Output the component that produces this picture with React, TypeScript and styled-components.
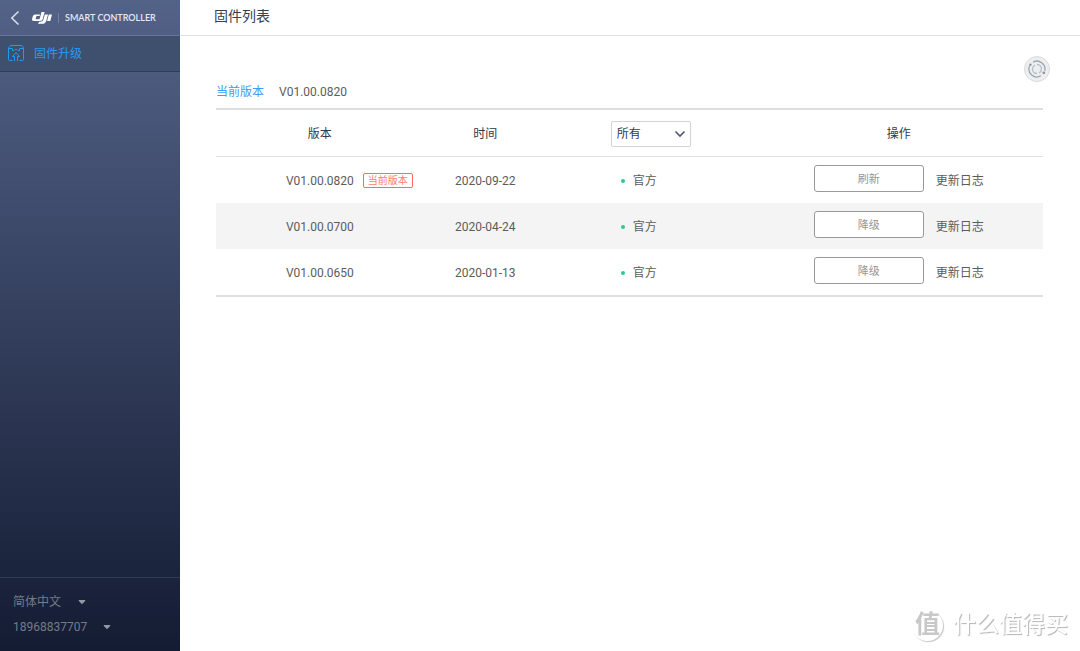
import React from "react";
import styled, { createGlobalStyle } from "styled-components";
import { SiDji } from "react-icons/si";

const GlobalStyle = createGlobalStyle`
  *, *::before, *::after { box-sizing: border-box; }
  body {
    margin: 0;
    background: #fff;
    color: #5c5c5c;
    font-family: Roboto, "Noto Sans CJK SC", sans-serif;
    font-size: 12px;
    line-height: 20px;
  }
  button, select { font: inherit; color: inherit; }
  a { color: inherit; text-decoration: none; }
`;

const Page = styled.div`
  display: flex;
  min-height: 100vh;
`;

const Sidebar = styled.aside`
  display: flex;
  flex-direction: column;
  flex: 0 0 180px;
  background: linear-gradient(#536287, #141c33);
`;

const Brand = styled.div`
  display: flex;
  align-items: center;
  height: 36px;
  padding-left: 10px;
  border-bottom: 1px solid #667699;
  color: #fff;
`;

const BackButton = styled.button`
  display: flex;
  margin-right: 12px;
  padding: 0;
  border: 0;
  background: none;
  color: #dde1ea;
`;

const ProductName = styled.span`
  margin-left: 6px;
  padding-left: 6px;
  border-left: 1px solid #7381a0;
  color: #e4e8f0;
  font-family: Lato, sans-serif;
  font-size: 9px;
  font-weight: 600;
  line-height: 10px;
  white-space: nowrap;
`;

const NavItem = styled.a`
  display: flex;
  align-items: center;
  gap: 9px;
  height: 36px;
  padding-left: 8px;
  border-bottom: 1px solid #2b3f5a;
  background: #3e506e;
  && { color: #2b9af3; }
`;

const Account = styled.div`
  display: flex;
  flex-direction: column;
  align-items: flex-start;
  gap: 5px;
  margin-top: auto;
  padding: 14px 13px;
  border-top: 1px solid #303a52;
  color: #747b8a;
`;

const Picker = styled.label`
  display: grid;
  align-items: center;
  > * { grid-area: 1 / 1; }
  > svg { justify-self: end; pointer-events: none; }
`;

const PlainSelect = styled.select`
  appearance: none;
  height: 20px;
  padding: 0 24px 0 0;
  border: 0;
  background: none;
`;

const AccountButton = styled.button`
  display: flex;
  align-items: center;
  gap: 16px;
  padding: 0;
  border: 0;
  background: none;
`;

const Main = styled.main`
  flex: 1;
  min-width: 0;
`;

const TitleBar = styled.header`
  height: 36px;
  padding: 0 34px;
  border-bottom: 1px solid #e0e0e0;
`;

const Title = styled.h1`
  margin: 0;
  color: #37404a;
  font-size: 14px;
  font-weight: 400;
  line-height: 32px;
`;

const Content = styled.section`
  padding: 20px 37px 0 36px;
`;

const Toolbar = styled.div`
  display: flex;
  justify-content: flex-end;
  margin-right: -7px;
`;

const RefreshButton = styled.button`
  display: flex;
  align-items: center;
  justify-content: center;
  width: 26px;
  height: 26px;
  padding: 0;
  border: 1px solid #dcdcdc;
  border-radius: 50%;
  background: #eee;
`;

const Current = styled.p`
  display: flex;
  gap: 15px;
  margin: 0 0 6px;
`;

const CurrentLabel = styled.span`
  color: #3d9df2;
`;

const Table = styled.table`
  width: 100%;
  table-layout: fixed;
  border-collapse: separate;
  border-spacing: 0;
  border-top: 2px solid #dfdfdf;
  border-bottom: 2px solid #dfdfdf;
  text-align: center;
`;

const HeadCell = styled.th<{ $width: string }>`
  width: ${(p) => p.$width};
  height: 47px;
  padding: 2px 0 0 1px;
  border-bottom: 1px solid #dfdfdf;
  color: #303a4c;
  font-weight: 400;
`;

const Row = styled.tr`
  &:nth-child(even) { background: #f4f4f4; }
`;

const Cell = styled.td`
  height: 46px;
  padding: 2px 0 0 1px;
`;

const FilterBox = styled(Picker)`
  width: 80px;
  margin: 0 auto;
  > svg { margin-right: 5px; }
`;

const FilterSelect = styled.select`
  appearance: none;
  width: 80px;
  height: 26px;
  padding: 0 5px;
  border: 1px solid #d3d3d3;
  border-radius: 2px;
  background: #fff;
`;

const Version = styled.div`
  display: grid;
  grid-template-columns: 1fr auto 1fr;
  align-items: center;
`;

const VersionNumber = styled.span`
  grid-column: 2;
`;

const Badge = styled.span`
  justify-self: start;
  margin: 0 0 2px 9px;
  padding: 0 4px;
  border: 1px solid #ff6b62;
  border-radius: 2px;
  color: #ff7a6e;
  font-size: 10px;
  line-height: 13px;
  white-space: nowrap;
`;

const Source = styled.span`
  display: flex;
  align-items: center;
  justify-content: center;
  gap: 8px;
  padding-right: 24px;
  &::before {
    width: 4px;
    height: 4px;
    border-radius: 50%;
    background: #2fc79a;
    content: "";
  }
`;

const Actions = styled.div`
  display: flex;
  align-items: center;
  justify-content: center;
  gap: 12px;
`;

const ActionButton = styled.button`
  width: 110px;
  height: 27px;
  margin-bottom: 5px;
  padding: 2px 0 0;
  border: 1px solid #999;
  border-radius: 3px;
  background: #fff;
  color: #969696;
  font-size: 11px;
`;

const Watermark = styled.div`
  position: fixed;
  right: 12px;
  bottom: 10px;
  display: flex;
  align-items: center;
  gap: 10px;
  color: #fff;
  font-size: 23px;
  font-weight: 500;
  line-height: 32px;
  text-shadow: 1px 1px 1px #b4b4b4;
  pointer-events: none;
`;

const Seal = styled.span`
  width: 31px;
  height: 31px;
  border-radius: 50%;
  box-shadow: 1px 1px 1px #c4c4c4;
  color: #c8c8c8;
  font-size: 25px;
  font-weight: 700;
  line-height: 29px;
  text-align: center;
  text-shadow: none;
`;

const Caret = () => (
  <svg width="8" height="5" viewBox="0 0 8 5" aria-hidden="true">
    <path d="M.8 0h6.400v1L4 4.200 .8 1z" fill="#9097a5" />
  </svg>
);

const Chevron = () => (
  <svg width="12" height="8" viewBox="0 0 12 8" fill="none" stroke="#4a5872" strokeWidth="1.6" aria-hidden="true">
    <path d="M1.5 1.5 6 6l4.500-4.500" />
  </svg>
);

const BackIcon = () => (
  <svg width="10" height="16" viewBox="0 0 10 16" fill="none" stroke="currentColor" strokeWidth="1.5" aria-hidden="true">
    <path d="M8.500 1.500 1.800 8l6.700 6.500" />
  </svg>
);

const FirmwareIcon = () => (
  <svg width="17" height="17" viewBox="0 0 17 17" fill="none" stroke="#1f9cec" aria-hidden="true">
    <path d="M4.500 15.500h-3a1 1 0 0 1-1-1V3L2.500.5h11.500L15.500 3v11.500a1 1 0 0 1-1 1h-3" />
    <path d="M.5 3.500h4v2h1.500l1-1h2l1 1h1.500v-2h4" />
    <path d="M6.500 16v-4.500h-2L8 7.500l3.500 4h-2V16" />
  </svg>
);

const RefreshIcon = () => (
  <svg width="18" height="18" viewBox="0 0 18 18" fill="none" stroke="#9aa7b3" strokeWidth="1.300" aria-hidden="true">
    <path d="M5 2.200a8 8 0 0 1 11.800 8.600" />
    <path d="M13 15.800A8 8 0 0 1 1.500 6" />
    <path d="M9 4.500a4.500 4.500 0 0 1 4.500 4.500c0 1.800-1 3.200-2.500 4" stroke="#b4bec7" />
    <path d="M9 13.500A4.500 4.500 0 0 1 4.500 9c0-1.800 1-3.200 2.500-4" stroke="#b4bec7" />
    <circle cx="2.400" cy="4.800" r="1.200" fill="#8796a5" stroke="none" />
    <circle cx="15.800" cy="12.800" r="1.400" fill="#8796a5" stroke="none" />
  </svg>
);

const releases = [
  { version: "V01.00.0820", date: "2020-09-22", action: "刷新", current: true },
  { version: "V01.00.0700", date: "2020-04-24", action: "降级", current: false },
  { version: "V01.00.0650", date: "2020-01-13", action: "降级", current: false },
];

export default function App() {
  return (
    <>
      <GlobalStyle />
      <Page>
        <Sidebar>
          <Brand>
            <BackButton aria-label="返回"><BackIcon /></BackButton>
            <SiDji size={20} aria-label="DJI" />
            <ProductName>SMART CONTROLLER</ProductName>
          </Brand>
          <nav>
            <NavItem href="#firmware"><FirmwareIcon />固件升级</NavItem>
          </nav>
          <Account>
            <Picker>
              <PlainSelect aria-label="语言"><option>简体中文</option></PlainSelect>
              <Caret />
            </Picker>
            <AccountButton>18968837707<Caret /></AccountButton>
          </Account>
        </Sidebar>
        <Main>
          <TitleBar><Title>固件列表</Title></TitleBar>
          <Content>
            <Toolbar>
              <RefreshButton aria-label="刷新列表"><RefreshIcon /></RefreshButton>
            </Toolbar>
            <Current>
              <CurrentLabel>当前版本</CurrentLabel>
              <span>V01.00.0820</span>
            </Current>
            <Table>
              <thead>
                <tr>
                  <HeadCell $width="25%">版本</HeadCell>
                  <HeadCell $width="15%">时间</HeadCell>
                  <HeadCell $width="25%">
                    <FilterBox>
                      <FilterSelect aria-label="类型"><option>所有</option></FilterSelect>
                      <Chevron />
                    </FilterBox>
                  </HeadCell>
                  <HeadCell $width="35%">操作</HeadCell>
                </tr>
              </thead>
              <tbody>
                {releases.map((r) => (
                  <Row key={r.version}>
                    <Cell>
                      <Version>
                        <VersionNumber>{r.version}</VersionNumber>
                        {r.current && <Badge>当前版本</Badge>}
                      </Version>
                    </Cell>
                    <Cell>{r.date}</Cell>
                    <Cell><Source>官方</Source></Cell>
                    <Cell>
                      <Actions>
                        <ActionButton>{r.action}</ActionButton>
                        <a href="#log">更新日志</a>
                      </Actions>
                    </Cell>
                  </Row>
                ))}
              </tbody>
            </Table>
          </Content>
        </Main>
      </Page>
      <Watermark><Seal>值</Seal>什么值得买</Watermark>
    </>
  );
}
